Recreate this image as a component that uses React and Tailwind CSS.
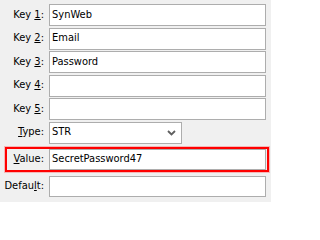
export default function App() {
  const keys = [
    { n: "1", v: "SynWeb" },
    { n: "2", v: "Email" },
    { n: "3", v: "Password" },
    { n: "4", v: "" },
    { n: "5", v: "" },
  ];

  const box =
    "w-[217px] bg-white border border-[#adadad] pl-[2px] flex items-center text-black";

  return (
    <div
      className="w-[271px] h-[202px] bg-[#f0f0f0] pt-[4px] flex flex-col text-[11px] text-black overflow-hidden"
      style={{ fontFamily: '"DejaVu Sans Condensed", "DejaVu Sans", Tahoma, sans-serif' }}
    >
      <div className="flex flex-col gap-[1.5px]">
        {keys.map((k) => (
          <div key={k.n} className="flex items-center">
            <div className="w-[44px] text-right whitespace-nowrap">
              Key <u className="underline-offset-1">{k.n}</u>:
            </div>
            <div className={box + " ml-[5px] h-[22px]"}>{k.v}</div>
          </div>
        ))}

        <div className="flex items-center">
          <div className="w-[44px] text-right">
            <u className="underline-offset-1">T</u>ype:
          </div>
          <div className="ml-[5px] w-[133px] h-[22px] bg-white border border-[#adadad] pl-[2px] pr-[5px] flex items-center justify-between">
            <span>STR</span>
            <svg width="9" height="6" viewBox="0 0 9 6">
              <path d="M1 1 L4.5 4.5 L8 1" fill="none" stroke="#5f5f5f" strokeWidth="1.8" />
            </svg>
          </div>
        </div>
      </div>

      <div className="mt-[3px] ml-[5px] w-[264px] h-[25px] border-2 border-[#ff0000] shadow-[0_0_0_1px_rgba(255,80,80,0.35)] flex items-center">
        <div className="w-[37px] text-right">
          <u className="underline-offset-1">V</u>alue:
        </div>
        <div className={box + " ml-[5px] h-[21px]"}>SecretPassword47</div>
      </div>

      <div className="mt-[4px] flex items-center">
        <div className="w-[44px] text-right whitespace-nowrap">
          Defau<u className="underline-offset-1">l</u>t:
        </div>
        <div className={box + " ml-[5px] h-[21px]"}></div>
      </div>
    </div>
  );
}
